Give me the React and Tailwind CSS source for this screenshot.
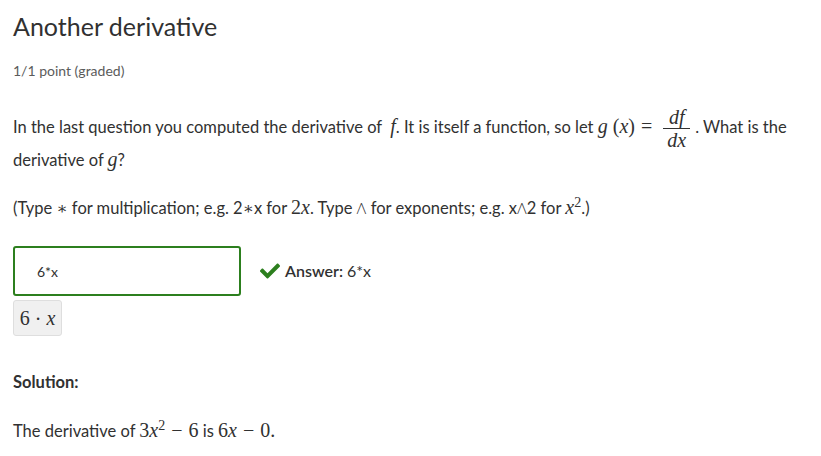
import { FaCheck } from 'react-icons/fa';

const sans = { fontFamily: 'Lato, "Liberation Sans", sans-serif' };
const serif = { fontFamily: '"Liberation Serif", "DejaVu Serif", serif' };

function Mi({ children }) {
  return <span className="italic" style={serif}>{children}</span>;
}

function Mn({ children }) {
  return <span style={serif}>{children}</span>;
}

function Op({ children }) {
  return <span className="mx-[6px]" style={serif}>{children}</span>;
}

function Frac({ top, bottom }) {
  return (
    <span className="inline-flex flex-col items-center align-middle mx-[5px] my-[-12px] text-[20px] leading-[21px]">
      <span className="px-[4px]">{top}</span>
      <span className="border-t border-[#313131] px-[4px]">{bottom}</span>
    </span>
  );
}

function Wedge() {
  return <span className="font-light text-[15px]">Λ</span>;
}

export default function App() {
  return (
    <div className="w-[821px] h-[456px] bg-white text-[#313131] px-[13px] overflow-hidden" style={sans}>
      <h2 className="text-[25px] leading-[32px] pt-[10px] font-normal text-[#313131]">Another derivative</h2>
      <div className="text-[14px] leading-[20px] mt-[19px] text-[#5b5b5b]">1/1 point (graded)</div>

      <p className="text-[16.5px] leading-[31px] mt-[29px]">
        In the last question you computed the derivative of&nbsp;&nbsp;<span className="text-[20px]"><Mi>f</Mi></span>. It is itself a function, so let{' '}
        <span className="text-[20px]"><Mi>g</Mi><span className="ml-[5px]"><Mn>(</Mn></span><Mi>x</Mi><Mn>)</Mn><Op>=</Op></span>
        <Frac top={<Mi>df</Mi>} bottom={<Mi>dx</Mi>} />. What is the
        <br />
        derivative of <span className="text-[20px]"><Mi>g</Mi></span>?
      </p>

      <p className="text-[16.5px] leading-[32px] mt-[14px]">
        (Type <span style={serif}>∗</span> for multiplication; e.g. 2<span style={serif}>∗</span>x for <span className="text-[20px]"><Mn>2</Mn><Mi>x</Mi></span>. Type{' '}
        <Wedge /> for exponents; e.g. x<Wedge />2 for{' '}
        <span className="text-[20px]"><Mi>x</Mi><sup className="text-[14px]"><Mn>2</Mn></sup></span>.)
      </p>

      <div className="flex items-center mt-[21px]">
        <div className="w-[228px] h-[50px] border-2 border-[#2c7f1e] rounded-[3px] flex items-center pl-[22px] text-[14px]">
          6*x
        </div>
        <div className="flex items-center ml-[19px] text-[16px]">
          <FaCheck className="text-[#2c7f1e] w-[20px] h-[20px] mr-[5px]" />
          <span className="font-semibold">Answer:</span>
          <span className="ml-[4px]">6*x</span>
        </div>
      </div>

      <div className="flex mt-[4px]">
        <div className="flex items-center justify-center w-[49px] h-[36px] bg-[#f0f0f0] border border-[#dedede] rounded-[3px] text-[20px]">
          <Mn>6</Mn><span className="mx-[5px]"><Mn>·</Mn></span><Mi>x</Mi>
        </div>
      </div>

      <div className="text-[16.5px] leading-[24px] font-bold mt-[34px]">Solution:</div>

      <p className="text-[16.5px] leading-[24px] mt-[23px]">
        The derivative of <span className="text-[20px]"><Mn>3</Mn><Mi>x</Mi><sup className="text-[14px]"><Mn>2</Mn></sup><Op>−</Op><Mn>6</Mn></span> is{' '}
        <span className="text-[20px]"><Mn>6</Mn><Mi>x</Mi><Op>−</Op><Mn>0.</Mn></span>
      </p>
    </div>
  );
}
